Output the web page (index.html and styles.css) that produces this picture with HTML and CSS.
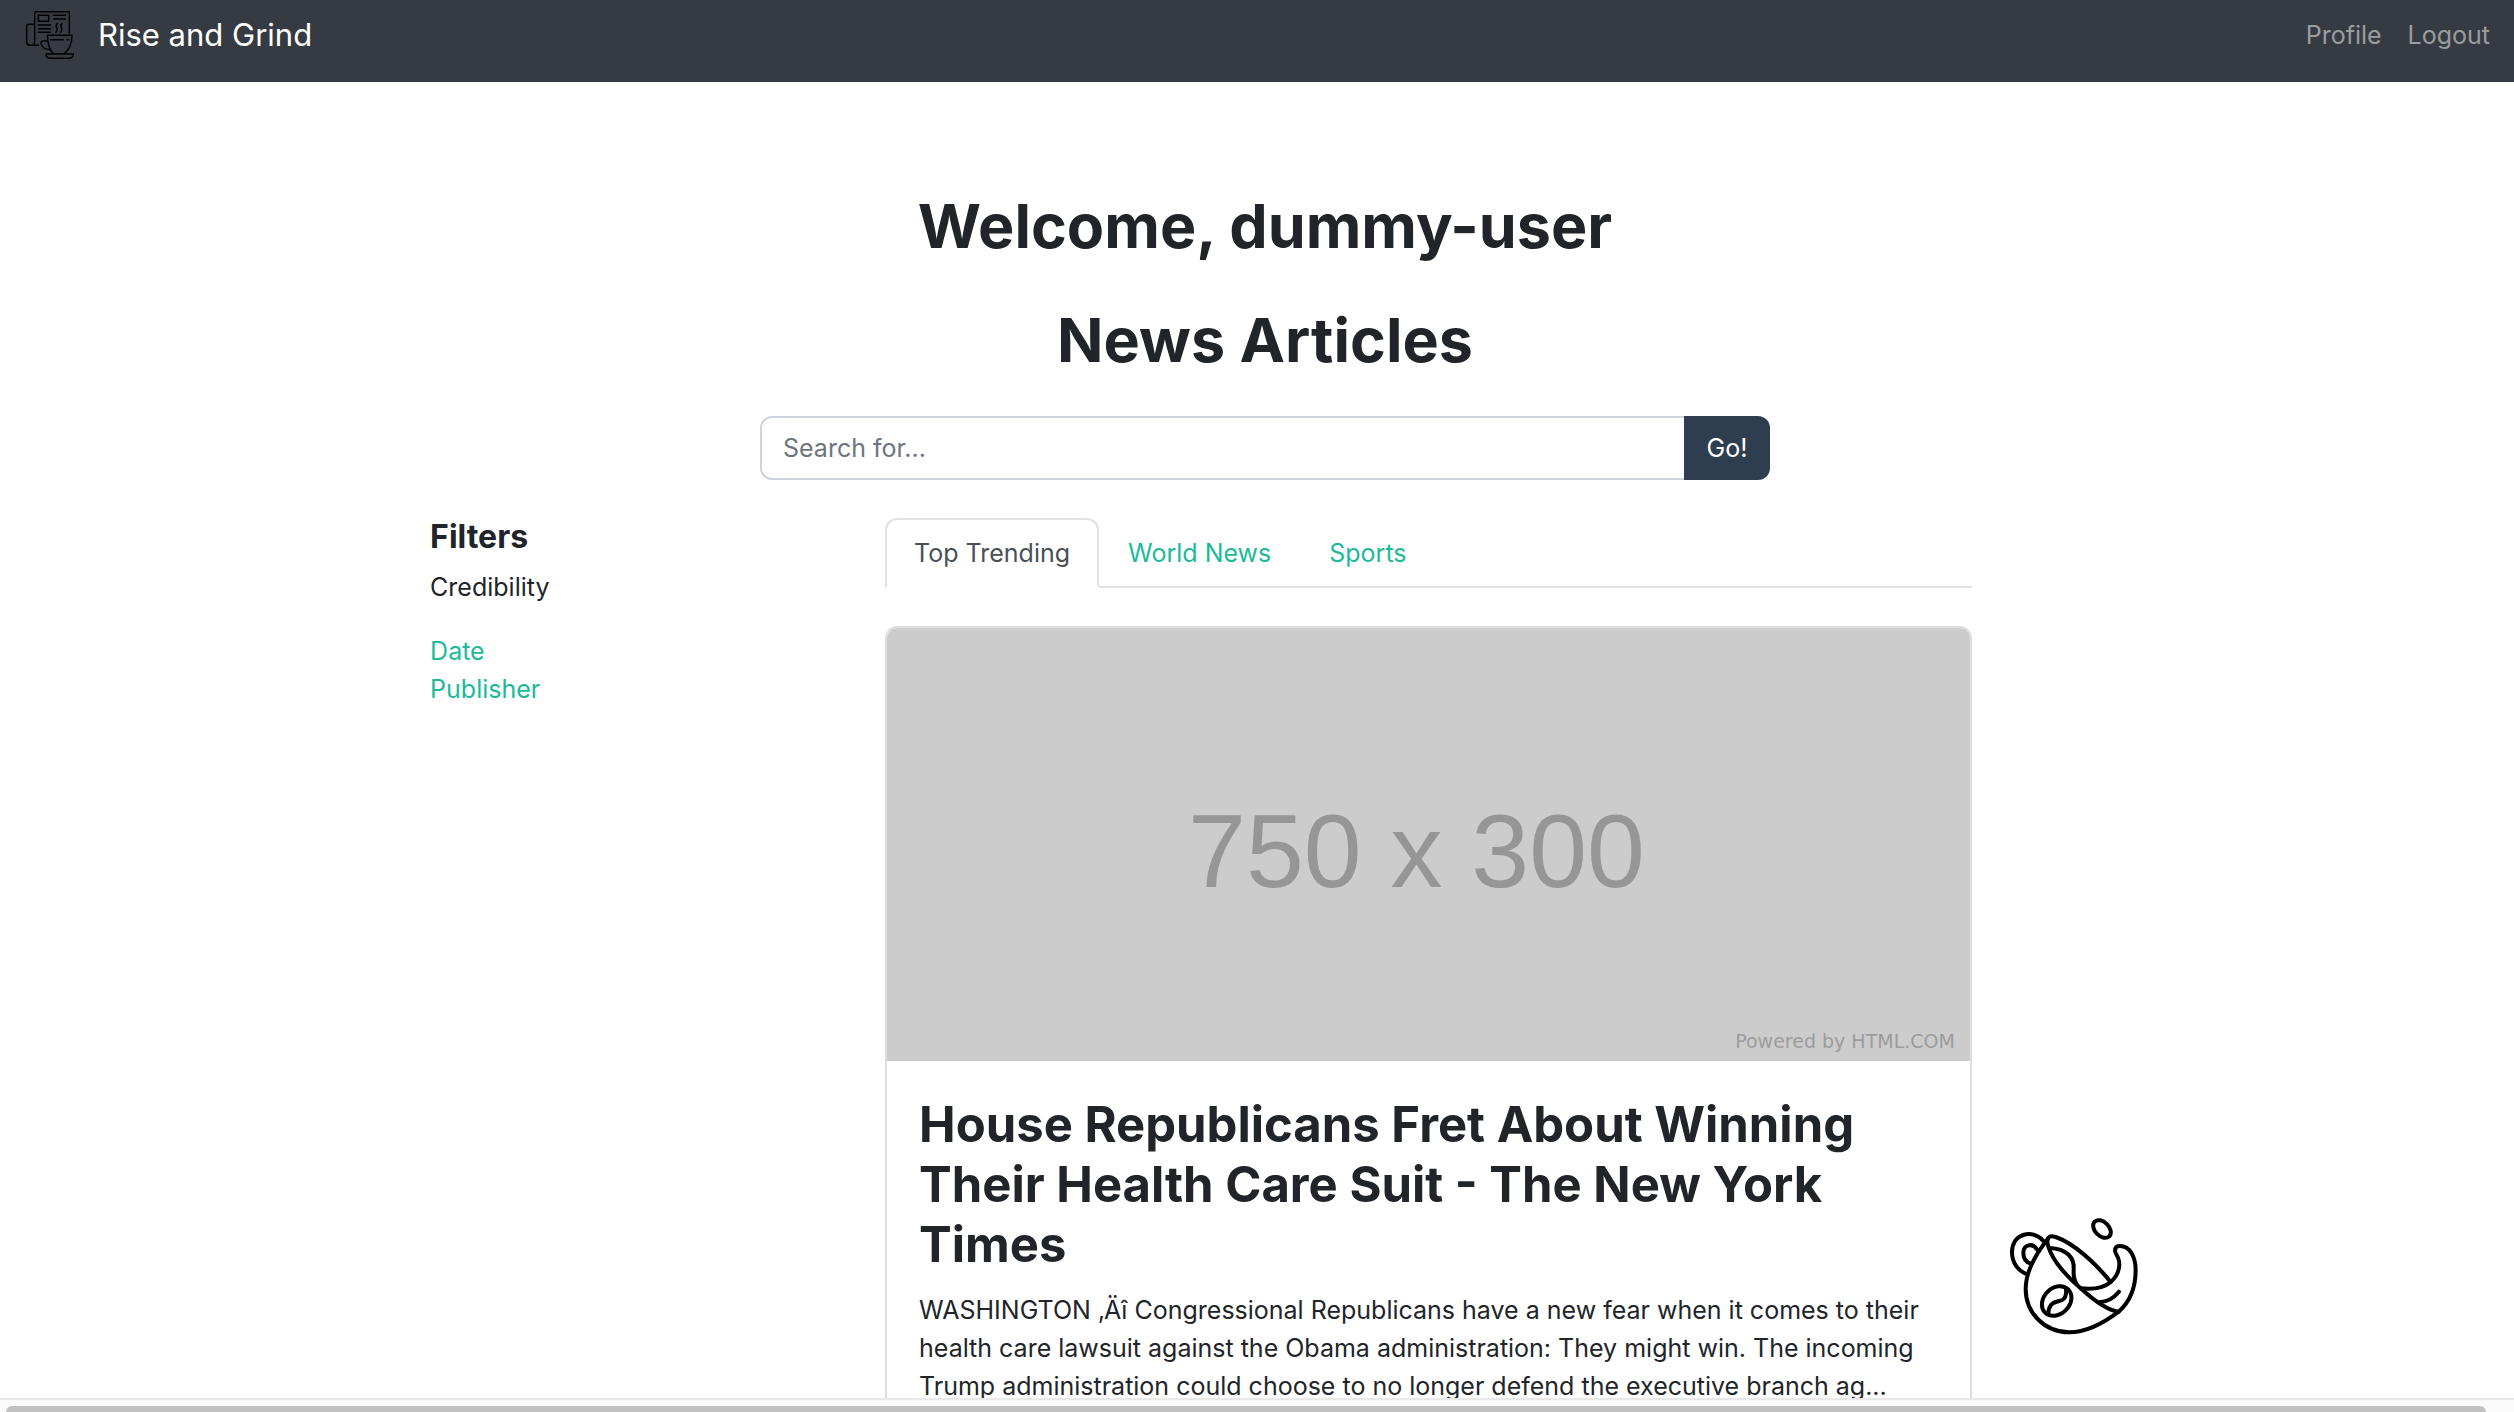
FILE: index.html
```html
<!DOCTYPE html>
<html lang="en">
<head>
<meta charset="utf-8">
<title>Rise and Grind</title>
<link rel="stylesheet" href="styles.css">
</head>
<body>
<header class="navbar">
  <a class="brand" href="#">
    <svg class="brand-icon" viewBox="72 30 156 156" fill="none" stroke="#000" stroke-width="4.5" stroke-linecap="round" stroke-linejoin="round" aria-hidden="true">
      <path d="M104 128V42q0-4 4-4H204q4 0 4 4V102M104 76H87q-7 0-7 7V129q0 10 9 10H115M104 128q0 8-6 11"/>
      <path d="M115 49h31v18h-31zM161 49h35M161 60h35M115 78h37M115 89h37M115 100h37M172 74q-6 5-2 12 4 8-2 14M186 74q-6 5-2 12 4 8-2 14"/>
      <path d="M142 109H216q0 38-24 55H160Q144 150 142 109zM143 126H129q-7 0-6 8 4 17 29 18M152 122H190M202 122h4M138 165H220q0 13-14 13H152q-14 0-14-13z"/>
    </svg>
    <span>Rise and Grind</span>
  </a>
  <nav class="nav-links">
    <a href="#">Profile</a>
    <a href="#">Logout</a>
  </nav>
</header>
<main class="page">
  <h1>Welcome, dummy-user</h1>
  <h1>News Articles</h1>
  <form class="search">
    <input type="text" placeholder="Search for..." aria-label="Search for">
    <button type="button">Go!</button>
  </form>
  <div class="layout">
    <aside class="filters">
      <h2>Filters</h2>
      <p>Credibility</p>
      <ul>
        <li><a href="#">Date</a></li>
        <li><a href="#">Publisher</a></li>
      </ul>
    </aside>
    <section class="articles">
      <nav class="tabs">
        <a class="active" href="#">Top Trending</a>
        <a href="#">World News</a>
        <a href="#">Sports</a>
      </nav>
      <article class="card">
        <div class="placeholder">
          <span class="size">750 x 300</span>
          <span class="credit">Powered by HTML.COM</span>
        </div>
        <div class="card-body">
          <h2>House Republicans Fret About Winning Their Health Care Suit - The New York Times</h2>
          <p>WASHINGTON ‚Äî Congressional Republicans have a new fear when it comes to their health care lawsuit against the Obama administration: They might win. The incoming Trump administration could choose to no longer defend the executive branch ag...</p>
        </div>
      </article>
    </section>
  </div>
</main>
<svg class="cup" viewBox="84 78 396 360" fill="none" stroke="#000" stroke-width="12" stroke-linecap="round" stroke-linejoin="round" aria-hidden="true">
  <path d="M191 154C160 116 96 128 96 187C96 220 116 243 139 252"/>
  <path d="M171 178C157 157 130 164 130 188C130 206 138 216 151 220"/>
  <path d="M205 145C165 195 137 245 137 297C137 370 195 427 268 427C320 427 370 400 416 365C450 335 467 290 467 240C467 202 450 168 420 168C403 168 402 182 410 195C424 218 420 252 392 276C368 297 330 298 302 295"/>
  <path d="M392 276C345 218 282 160 227 141Q202 132 202 158C210 200 250 250 302 295C340 330 380 362 416 365"/>
  <path d="M208 174C262 176 284 205 281 238Q279 265 290 283M357 337Q392 335 417 305"/>
  <ellipse cx="366" cy="117" rx="31" ry="21" transform="rotate(45 366 117)"/>
  <ellipse cx="230" cy="333" rx="49" ry="39" transform="rotate(-45 230 333)"/>
  <path d="M258 296C262 345 230 325 213 345Q205 355 205 372"/>
</svg>
<div class="scrollbar" aria-hidden="true"><div class="thumb"></div></div>
</body>
</html>
```
FILE: styles.css
```css
* { box-sizing: border-box; }
body {
  margin: 0;
  height: 100vh;
  overflow: hidden;
  background: #fff;
  color: #212529;
  font: 25px/38px Inter, "Liberation Sans", sans-serif;
}
h1, h2, p, ul { margin: 0; padding: 0; }
a { color: #1dba99; text-decoration: none; }

.navbar {
  display: flex;
  justify-content: space-between;
  height: 82px;
  padding: 10px 24px 20px;
  background: #363a42;
}
.brand {
  display: flex;
  align-items: center;
  gap: 22px;
  height: 50px;
  color: #fff;
  font-size: 31px;
}
.brand-icon { width: 52px; height: 52px; }
.nav-links { display: flex; gap: 26px; padding-top: 6px; }
.nav-links a { color: #9a9da0; }

.page { width: calc(100% + 16px); padding-top: 106px; }
h1 {
  margin-bottom: 38px;
  font-size: 61px;
  line-height: 76px;
  text-align: center;
}
.search {
  display: flex;
  width: 40%;
  max-width: 1010px;
  height: 64px;
  margin: 0 auto 38px;
}
.search input {
  flex: 1;
  min-width: 0;
  padding: 0 21px;
  border: 2px solid #ced4da;
  border-right: 0;
  border-radius: 12px 0 0 12px;
  color: inherit;
  font: inherit;
}
.search input::placeholder { color: #6c757d; opacity: 1; }
.search button {
  width: 86px;
  padding: 0;
  border: 0;
  border-radius: 0 12px 12px 0;
  background: #2e3e50;
  color: #fff;
  font: inherit;
}
.layout {
  display: grid;
  grid-template-columns: 431fr 1087fr 104fr;
  gap: 24px;
  width: 66%;
  margin: 0 auto;
}
.filters h2 { margin-bottom: 12px; font-size: 32px; line-height: 38px; }
.filters p { margin-bottom: 26px; }
.filters ul { list-style: none; }

.tabs {
  display: flex;
  margin-bottom: 38px;
  border-bottom: 2px solid #dee2e6;
}
.tabs a {
  margin-bottom: -2px;
  padding: 14px 27px;
  border: 2px solid transparent;
  border-radius: 12px 12px 0 0;
}
.tabs .active {
  border-color: #dee2e6 #dee2e6 #fff;
  background: #fff;
  color: #495057;
}
.card {
  overflow: hidden;
  border: 2px solid #dfdfdf;
  border-radius: 12px;
}
.placeholder {
  position: relative;
  display: flex;
  align-items: center;
  justify-content: center;
  aspect-ratio: 5 / 2;
  padding: 12px 24px 0 0;
  background: #ccc;
  color: #969696;
}
.size { font: 104px/1 "Liberation Sans Narrow", "Liberation Sans", sans-serif; }
.credit {
  position: absolute;
  right: 15px;
  bottom: 8px;
  color: #9c9c9c;
  font: 19px/24px "DejaVu Sans", sans-serif;
}
.card-body { padding: 34px 32px; }
.card-body h2 { margin-bottom: 16px; font-size: 49px; line-height: 60px; }

.cup {
  position: fixed;
  right: 374px;
  bottom: 76px;
  width: 132px;
  height: 120px;
}
.scrollbar {
  position: fixed;
  right: 0;
  bottom: 0;
  left: 0;
  height: 14px;
  padding: 6px 28px 0 6px;
  border-top: 2px solid #e8e8e8;
  background: #fafafa;
}
.thumb {
  height: 6px;
  border-radius: 8px 8px 0 0;
  background: #c1c1c1;
}
```
